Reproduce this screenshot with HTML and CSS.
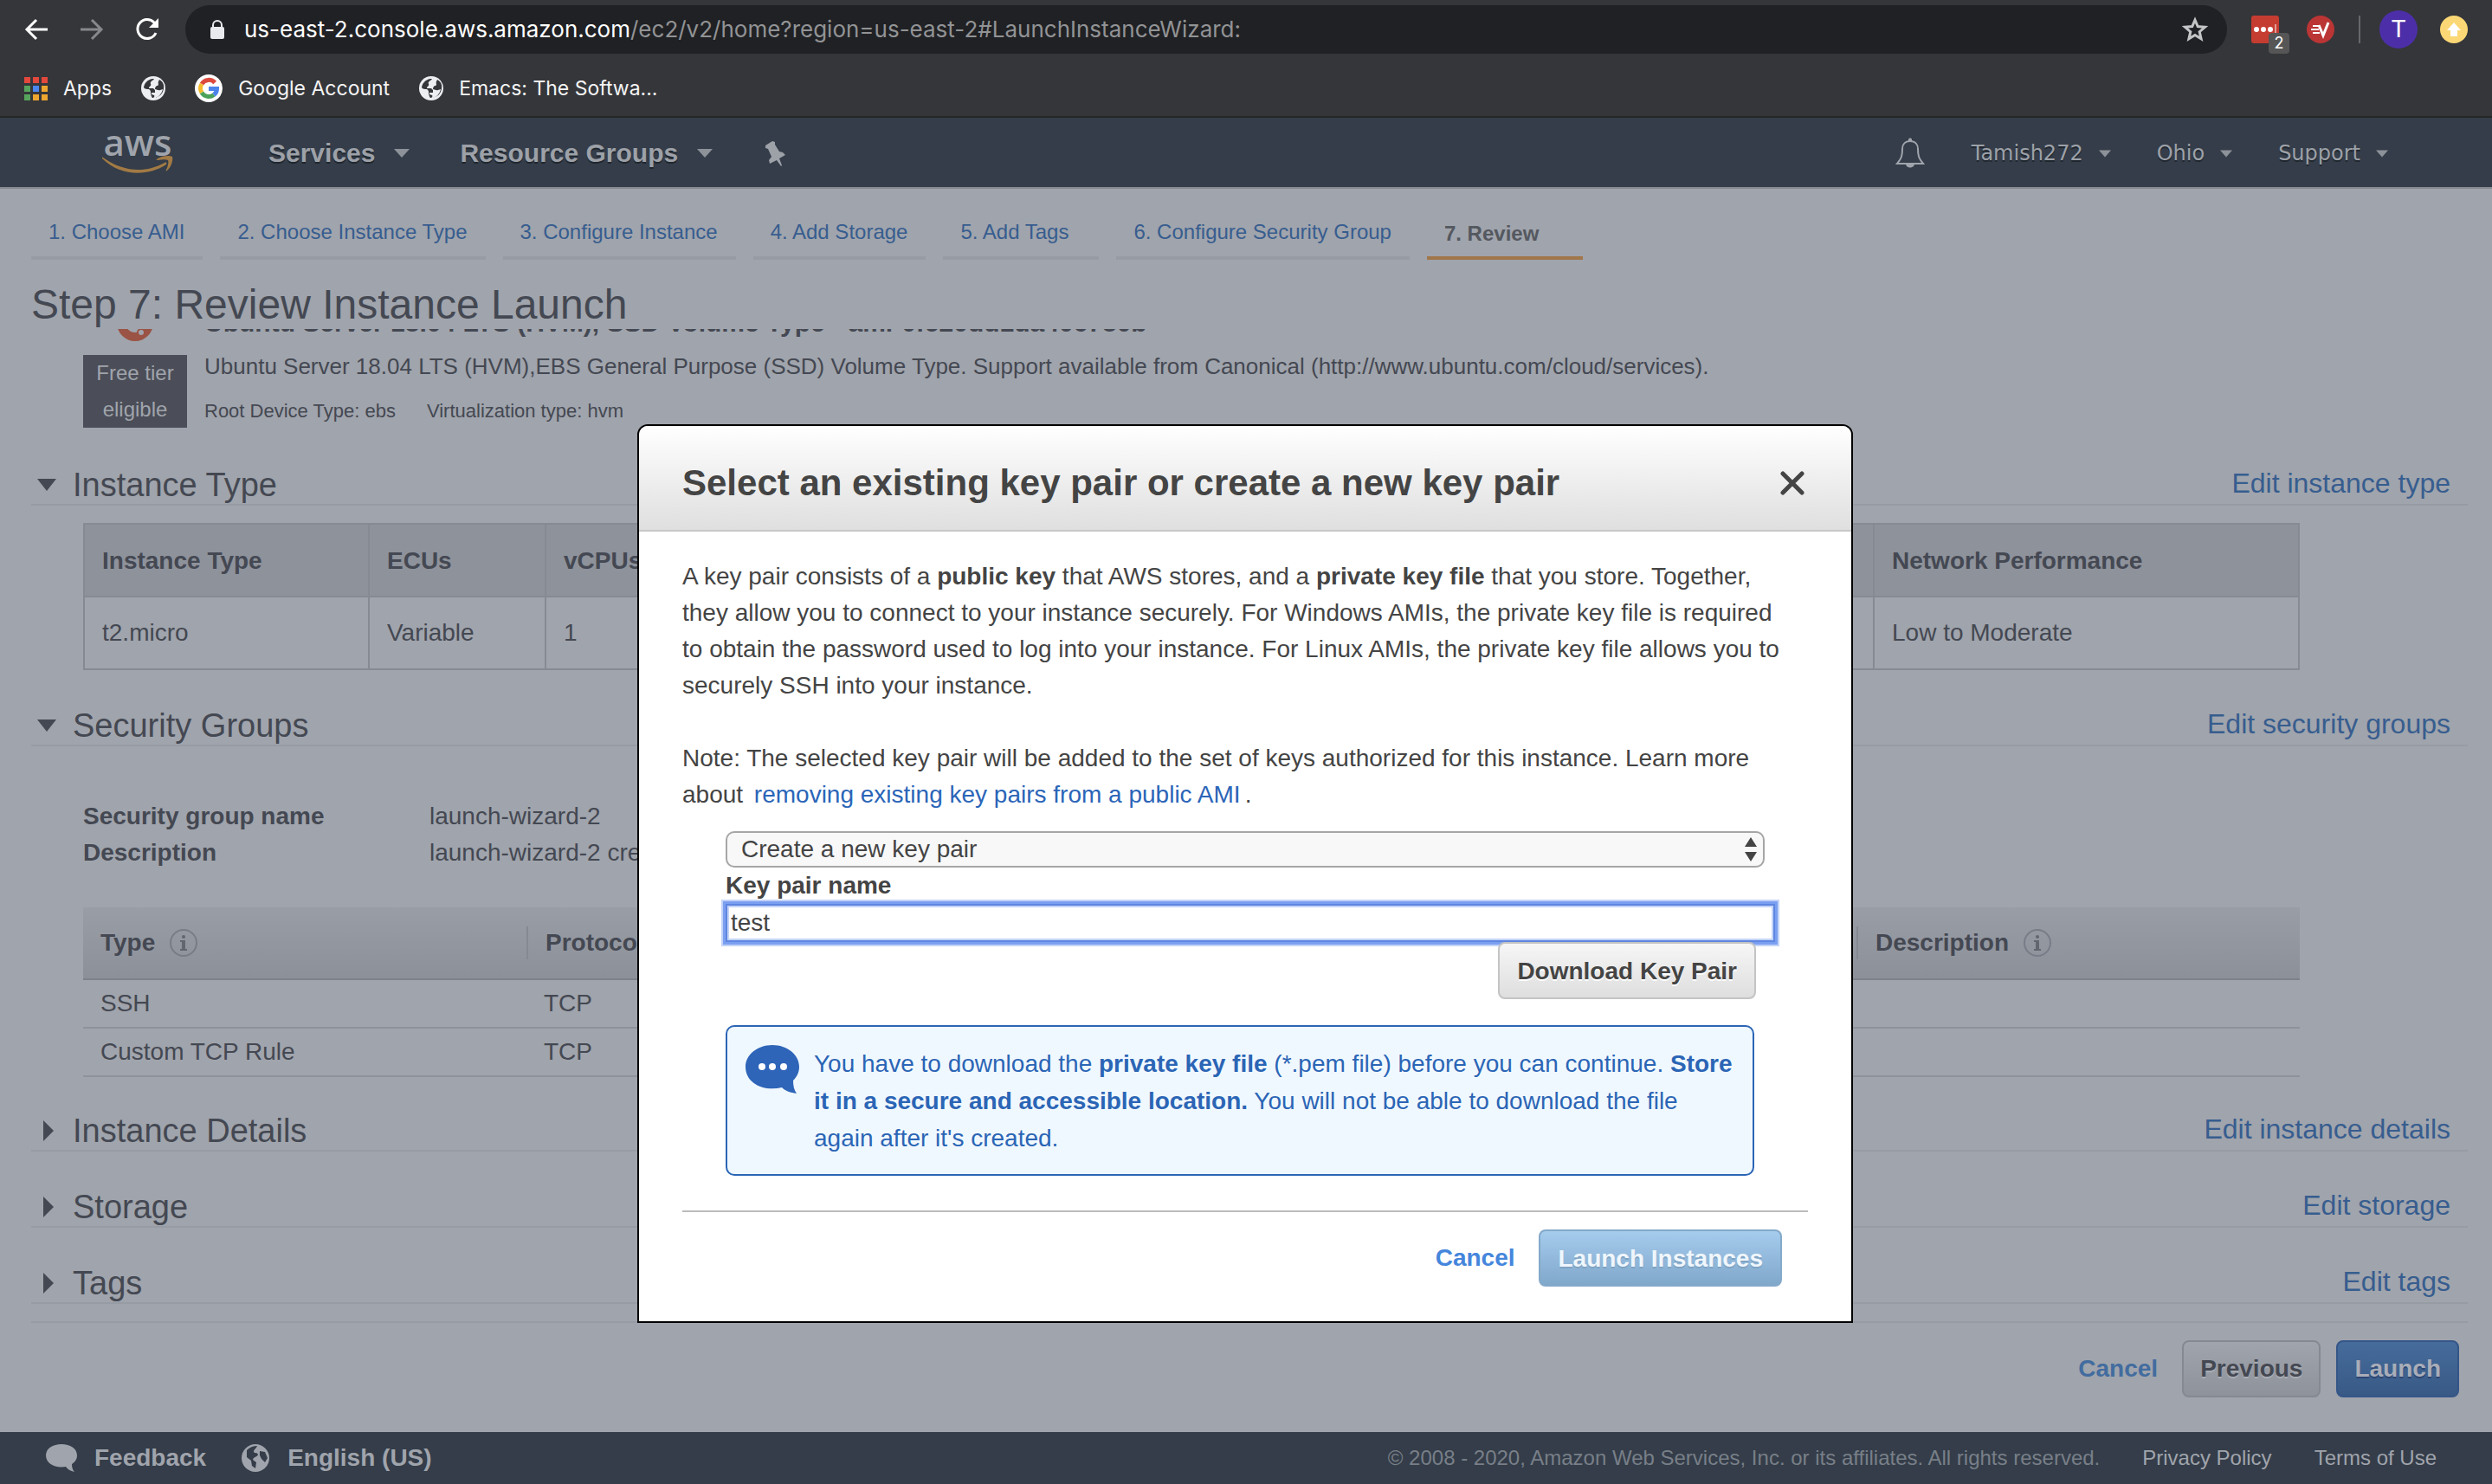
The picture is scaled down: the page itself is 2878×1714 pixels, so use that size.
FILE: index.html
```html
<!DOCTYPE html>
<html lang="en">
<head>
<meta charset="utf-8">
<meta name="viewport" content="width=device-width, initial-scale=1">
<title>Launch instance wizard | EC2 Management Console</title>
<link rel="stylesheet" href="styles.css">
</head>
<body>
<svg class="defs" aria-hidden="true">
  <symbol id="globe" viewBox="0 0 28 28">
    <circle cx="14" cy="14" r="14" fill="#eceef1"/>
    <path d="M3 14C3 9 7 4 13 3h2c-1 2-3 2-4 4-1 1 1 2 0 4-1 1-2 1-2 3h5l2 2v3h-4v2l3 1c1 1 0 2-1 3 6 0 10-5 11-10l-3 1c-2 1-4-1-6-1 0-2 1-4 3-4 2-1 0-3 1-5l1-2c6 3 6 9 4 14-3 6-8 7-12 7-1-1-2-4-2-6 0-1 0-3-2-4-2 0-5 0-6-2z" fill="#35363a"/>
  </symbol>
  <symbol id="down" viewBox="0 0 18 10"><path d="M0 0h18l-9 10z" fill="currentColor"/></symbol>
  <symbol id="info" viewBox="0 0 34 34">
    <circle cx="17" cy="17" r="15" fill="none" stroke="#787c86" stroke-width="2"/>
    <circle cx="17" cy="10" r="2" fill="#62666f"/>
    <path d="M13 14h6v10h2v2h-8v-2h2v-8h-2z" fill="#62666f"/>
  </symbol>
</svg>

<header class="chrome">
  <div class="toolbar">
    <button class="tool" aria-label="Back"><svg width="28" height="28" viewBox="0 0 28 28"><path d="M27 14H3M14 3L3 14l11 11" fill="none" stroke="#fff" stroke-width="3"/></svg></button>
    <button class="tool" aria-label="Forward"><svg width="28" height="28" viewBox="0 0 28 28"><path d="M1 14h24M14 3l11 11-11 11" fill="none" stroke="#87888b" stroke-width="3"/></svg></button>
    <button class="tool" aria-label="Reload"><svg width="28" height="28" viewBox="0 0 28 28"><path d="M24 18a11 11 0 1 1-2-12l3 3" fill="none" stroke="#fff" stroke-width="3"/><path d="M27 1v11H16z" fill="#fff"/></svg></button>
    <div class="omnibox">
      <svg width="18" height="24" viewBox="0 0 18 24"><path d="M4 10V7a5 5 0 0 1 10 0v3" fill="none" stroke="#e8eaed" stroke-width="2"/><rect x="1" y="9" width="16" height="14" rx="2" fill="#e8eaed"/></svg>
      <span class="url"><b>us-east-2.console.aws.amazon.com</b>/ec2/v2/home?region=us-east-2#LaunchInstanceWizard:</span>
      <svg width="30" height="30" viewBox="0 0 30 30"><path d="M15 4l3.200 7.600 8.300.7-6.300 5.400 1.900 8.100L15 21.500l-7.100 4.300 1.900-8.100-6.300-5.400 8.300-.7z" fill="none" stroke="#c4c5c7" stroke-width="3"/></svg>
    </div>
    <span class="extension">
      <svg width="32" height="32" viewBox="0 0 32 32"><rect width="32" height="32" rx="3" fill="#c53c31"/><circle cx="6" cy="16" r="3" fill="#fff"/><circle cx="14" cy="16" r="3" fill="#fff"/><circle cx="22" cy="16" r="3" fill="#fff"/><path d="M28 10v10" stroke="#fff" stroke-width="1"/></svg>
      <span class="badge">2</span>
    </span>
    <svg class="extension" width="32" height="32" viewBox="0 0 32 32"><circle cx="16" cy="16" r="16" fill="#bb3535"/><path d="M7 12h8M5 16h9M7 20h8" fill="none" stroke="#fff" stroke-width="2"/><path d="M14 11l5 12 6-15" fill="none" stroke="#fff" stroke-width="3"/></svg>
    <span class="divider"></span>
    <span class="avatar">T</span>
    <svg class="update" width="32" height="32" viewBox="0 0 32 32"><circle cx="16" cy="16" r="16" fill="#fbd875"/><path d="M16 8l8 9h-4v7h-8v-7H8z" fill="#fff"/></svg>
  </div>
  <nav class="bookmarks">
    <a href="#"><svg width="27" height="27" viewBox="0 0 27 27"><path d="M0 0h7v7H0zM10 0h7v7h-7zM20 0h7v7h-7z" fill="#e2483c"/><path d="M0 10h7v7H0zM0 20h7v7H0z" fill="#56a45c"/><path d="M10 10h7v7h-7z" fill="#4b87ee"/><path d="M20 10h7v7h-7zM10 20h7v7h-7zM20 20h7v7h-7z" fill="#eda62f"/></svg>Apps</a>
    <a href="#" aria-label="Bookmark"><svg width="28" height="28"><use href="#globe"/></svg></a>
    <a href="#"><svg width="32" height="32" viewBox="0 0 32 32"><circle cx="16" cy="16" r="16" fill="#fff"/><g fill="none" stroke-width="5"><path d="M23.200 9.500A9.500 9.500 0 0 0 8 11" stroke="#dc4a3d"/><path d="M8 11a9.500 9.500 0 0 0 0 10" stroke="#f5bb2e"/><path d="M8 21a9.500 9.500 0 0 0 14 2.500" stroke="#4ba25a"/><path d="M16 16.500h9.500c0 3-1.500 5.500-3.500 7" stroke="#4b83ea"/></g></svg>Google Account</a>
    <a href="#"><svg width="28" height="28"><use href="#globe"/></svg>Emacs: The Softwa...</a>
  </nav>
</header>

<div class="console">
  <nav class="awsnav">
    <a class="logo" href="#"><span>aws</span><svg width="82" height="20" viewBox="0 0 82 20"><path d="M1 2c24 17 49 18 71 6 2-1 3 0 2 2-21 14-53 14-74-7-1-1 0-2 1-1z" fill="#a27a45"/><path d="M63 4c5-4 14-5 18-3 1 4-1 12-6 16-1 1-2 0-1-1 2-4 3-9 2-11-2-1-7-1-12 0-1 0-2 0-1-1z" fill="#a27a45"/></svg></a>
    <button class="menu main-menu">Services <svg width="18" height="10"><use href="#down"/></svg></button>
    <button class="menu main-menu">Resource Groups <svg width="18" height="10"><use href="#down"/></svg></button>
    <button class="menu" aria-label="Pin"><svg width="26" height="30" viewBox="0 0 26 30"><path d="M3 6l8-5 3 1v3l5 8 4 1 3 3-7 4 3 8-1 1-5-7-8 4-1-4 3-4-4-9-3-1z" fill="#9da1a8"/></svg></button>
    <span class="grow"></span>
    <button class="menu bell" aria-label="Notifications"><svg width="34" height="36" viewBox="0 0 34 36"><path d="M17 4c-6 0-9 4-9 9 0 8-1 11-6 17h30c-5-6-6-9-6-17 0-5-3-9-9-9z" fill="none" stroke="#a0a4ac" stroke-width="2"/><path d="M15 4V2c0-2 4-2 4 0v2zM12 30h10c0 6-10 6-10 0z" fill="#a0a4ac"/></svg></button>
    <button class="menu small-menu">Tamish272 <svg width="14" height="9"><use href="#down"/></svg></button>
    <button class="menu small-menu">Ohio <svg width="14" height="9"><use href="#down"/></svg></button>
    <button class="menu small-menu">Support <svg width="14" height="9"><use href="#down"/></svg></button>
  </nav>

  <main class="wizard">
    <nav class="steps">
      <a href="#">1. Choose AMI</a>
      <a href="#">2. Choose Instance Type</a>
      <a href="#">3. Configure Instance</a>
      <a href="#">4. Add Storage</a>
      <a href="#">5. Add Tags</a>
      <a href="#">6. Configure Security Group</a>
      <span class="current">7. Review</span>
    </nav>
    <h1>Step 7: Review Instance Launch</h1>

    <div class="review">
      <section class="ami">
        <div class="ami-side">
          <svg width="42" height="42" viewBox="0 0 42 42"><circle cx="21" cy="21" r="21" fill="#9a5344"/><circle cx="21" cy="21" r="9" fill="none" stroke="#a0a4ac" stroke-width="4"/><g fill="#a0a4ac" stroke="#9a5344" stroke-width="2"><circle cx="8" cy="21" r="4"/><circle cx="28" cy="10" r="4"/><circle cx="28" cy="32" r="4"/></g></svg>
          <span class="tier">Free tier eligible</span>
        </div>
        <div>
          <h2>Ubuntu Server 18.04 LTS (HVM), SSD Volume Type - ami-0fc20dd1da406780b</h2>
          <p>Ubuntu Server 18.04 LTS (HVM),EBS General Purpose (SSD) Volume Type. Support available from Canonical (http://www.ubuntu.com/cloud/services).</p>
          <p class="facts"><span>Root Device Type: ebs</span><span>Virtualization type: hvm</span></p>
        </div>
      </section>

      <section>
        <div class="head"><svg width="24" height="14" viewBox="0 0 24 14"><path d="M1 0h22L12 14z" fill="#444852"/></svg><h2>Instance Type</h2><a href="#">Edit instance type</a></div>
        <table class="type-table">
          <colgroup><col class="c-type"><col class="c-ecu"><col><col class="c-net"></colgroup>
          <thead><tr><th>Instance Type</th><th>ECUs</th><th>vCPUs</th><th>Network Performance</th></tr></thead>
          <tbody><tr><td>t2.micro</td><td>Variable</td><td>1</td><td>Low to Moderate</td></tr></tbody>
        </table>
      </section>

      <section>
        <div class="head"><svg width="24" height="14" viewBox="0 0 24 14"><path d="M1 0h22L12 14z" fill="#444852"/></svg><h2>Security Groups</h2><a href="#">Edit security groups</a></div>
        <dl class="group">
          <dt>Security group name</dt><dd>launch-wizard-2</dd>
          <dt>Description</dt><dd>launch-wizard-2 created</dd>
        </dl>
        <table class="rules">
          <colgroup><col class="c-rule"><col><col class="c-desc"></colgroup>
          <thead><tr>
            <th><span>Type <svg width="34" height="34"><use href="#info"/></svg></span></th>
            <th><span>Protocol</span></th>
            <th><span>Description <svg width="34" height="34"><use href="#info"/></svg></span></th>
          </tr></thead>
          <tbody>
            <tr><td>SSH</td><td>TCP</td><td></td></tr>
            <tr><td>Custom TCP Rule</td><td>TCP</td><td></td></tr>
          </tbody>
        </table>
      </section>

      <section class="closed"><div class="head"><svg width="24" height="24" viewBox="0 0 24 24"><path d="M8 0v24l12-12z" fill="#444852"/></svg><h2>Instance Details</h2><a href="#">Edit instance details</a></div></section>
      <section class="closed"><div class="head"><svg width="24" height="24" viewBox="0 0 24 24"><path d="M8 0v24l12-12z" fill="#444852"/></svg><h2>Storage</h2><a href="#">Edit storage</a></div></section>
      <section class="closed"><div class="head"><svg width="24" height="24" viewBox="0 0 24 24"><path d="M8 0v24l12-12z" fill="#444852"/></svg><h2>Tags</h2><a href="#">Edit tags</a></div></section>
    </div>

    <div class="wizard-actions">
      <a href="#">Cancel</a>
      <button class="btn dim">Previous</button>
      <button class="btn dim-primary">Launch</button>
    </div>
  </main>

  <footer class="footer">
    <a class="strong" href="#"><svg width="36" height="32" viewBox="0 0 36 32"><path d="M18 0c10 0 18 5 18 13 0 5-3 8-6 10 0 4 1 7 3 9-5-1-8-3-10-6C10 28 0 22 0 13 0 5 8 0 18 0z" fill="#a0a4ac"/></svg>Feedback</a>
    <a class="strong" href="#"><svg width="34" height="34" viewBox="0 0 34 34"><circle cx="17" cy="17" r="16" fill="#a0a4ac"/><path d="M7 8c4-4 8-5 12-5-1 3-4 4-4 7 1 2 4 0 5 3-1 3-5 2-6 6l4 3-1 7-4-3-1-6-5-4zM22 9l6 1 3 7-3 5-4-4-2-4z" fill="#343d49"/></svg>English (US)</a>
    <span class="grow"></span>
    <span class="legal">© 2008 - 2020, Amazon Web Services, Inc. or its affiliates. All rights reserved.</span>
    <a href="#">Privacy Policy</a>
    <a href="#">Terms of Use</a>
  </footer>

  <div class="overlay">
    <div class="modal" role="dialog" aria-labelledby="modal-title">
      <div class="modal-head">
        <h2 id="modal-title">Select an existing key pair or create a new key pair</h2>
        <button class="close" aria-label="Close"><svg width="28" height="28" viewBox="0 0 28 28"><path d="M3 3l22 22M25 3L3 25" fill="none" stroke="#444" stroke-width="5" stroke-linecap="round"/></svg></button>
      </div>
      <div class="modal-body">
        <p>A key pair consists of a <b>public key</b> that AWS stores, and a <b>private key file</b> that you store. Together, they allow you to connect to your instance securely. For Windows AMIs, the private key file is required to obtain the password used to log into your instance. For Linux AMIs, the private key file allows you to securely SSH into your instance.</p>
        <p>Note: The selected key pair will be added to the set of keys authorized for this instance. Learn more about <a href="#">removing existing key pairs from a public AMI</a>.</p>
        <form class="key-form">
          <div class="select">
            <select aria-label="Key pair option"><option>Create a new key pair</option></select>
            <svg width="14" height="28" viewBox="0 0 14 28"><path d="M7 0l7 11H0zM7 28l7-11H0z" fill="#444"/></svg>
          </div>
          <label for="key-name">Key pair name</label>
          <input id="key-name" type="text" value="test">
          <button class="btn download" type="button">Download Key Pair</button>
          <div class="notice">
            <svg width="62" height="56" viewBox="0 0 62 56"><path d="M31 0c17 0 31 11 31 25 0 7-3 12-7 16 0 6 1 11 4 15-7-1-13-3-17-7C22 54 0 45 0 25 0 11 14 0 31 0z" fill="#2e65b8"/><g fill="#fff"><circle cx="19" cy="25" r="4"/><circle cx="31" cy="25" r="4"/><circle cx="44" cy="25" r="4"/></g></svg>
            <p>You have to download the <b>private key file</b> (*.pem file) before you can continue. <b>Store it in a secure and accessible location.</b> You will not be able to download the file again after it's created.</p>
          </div>
        </form>
        <div class="modal-actions">
          <a href="#">Cancel</a>
          <button class="btn pale-primary">Launch Instances</button>
        </div>
      </div>
    </div>
  </div>
</div>
</body>
</html>
```
FILE: styles.css
```css
* { box-sizing: border-box; }

body {
  margin: 0;
  min-height: 100vh;
  display: flex;
  flex-direction: column;
  background: #a0a4ac;
  color: #444852;
  font: 28px/42px "Liberation Sans", Arial, sans-serif;
}

h1, h2, p, dl, dd { margin: 0; }
a { color: #375d8f; text-decoration: none; }
button { font: inherit; color: inherit; border: 0; padding: 0; background: none; }
svg { display: block; flex: none; }
.defs { position: absolute; width: 0; height: 0; }
.grow { flex: 1; }

/* Browser chrome */
.chrome {
  background: #35363a;
  border-bottom: 2px solid #262726;
  font-family: Inter, sans-serif;
}
.toolbar {
  display: flex;
  align-items: center;
  height: 68px;
  padding: 0 28px;
}
.tool { margin-right: 36px; }
.omnibox {
  flex: 1;
  display: flex;
  align-items: center;
  height: 56px;
  margin: 0 28px 0 -6px;
  padding: 0 22px 0 28px;
  border-radius: 28px;
  background: #202124;
}
.url { flex: 1; margin-left: 22px; color: #929395; font-size: 26px; line-height: 40px; }
.url b { color: #fff; font-weight: 400; }
.extension { position: relative; margin-right: 32px; }
.badge {
  position: absolute;
  left: 20px;
  top: 20px;
  width: 24px;
  border-radius: 4px;
  background: #565656;
  color: #fff;
  font-size: 18px;
  line-height: 24px;
  text-align: center;
}
.divider { width: 2px; height: 32px; margin: 0 22px 0 -4px; background: #66676a; }
.avatar {
  width: 44px;
  margin-right: 26px;
  border-radius: 50%;
  background: #4c2fa8;
  color: #fff;
  font: 28px/44px Roboto, sans-serif;
  text-align: center;
}
.bookmarks {
  display: flex;
  align-items: center;
  gap: 34px;
  height: 66px;
  padding: 2px 28px 0;
}
.bookmarks a {
  display: flex;
  align-items: center;
  gap: 18px;
  color: #f4f4f4;
  font-size: 23px;
}

/* Console navigation */
.console { position: relative; flex: 1; display: flex; flex-direction: column; }
.awsnav {
  display: flex;
  align-items: center;
  height: 82px;
  padding: 2px 120px 0 118px;
  background: #343d49;
  border-bottom: 2px solid #868a8f;
  color: #a0a4ac;
}
.logo {
  display: flex;
  flex-direction: column;
  align-items: center;
  margin-right: 110px;
  padding-bottom: 6px;
  color: #a0a4ac;
  font: 600 42px/32px "Open Sans", sans-serif;
}
.menu { display: flex; align-items: center; text-shadow: 0 2px 0 #20262e; color: #9da1a8; }
.menu svg { color: #8d9299; }
.main-menu { gap: 22px; margin-right: 58px; font-weight: 700; font-size: 30px; }
.bell { margin-right: 54px; }
.small-menu { gap: 18px; font: 24px/36px "DejaVu Sans", sans-serif; }
.small-menu + .small-menu { margin-left: 53px; }

/* Wizard */
.wizard { flex: 1; padding: 32px 28px 40px 36px; }
.steps { display: flex; gap: 20px; font-size: 24px; line-height: 36px; }
.steps > * { min-width: 180px; padding: 0 21px 10px 20px; border-bottom: 4px solid #979ba4; }
.steps .current {
  padding-bottom: 6px;
  border-color: #a0764a;
  color: #54585f;
  font-weight: 700;
  line-height: 40px;
}
h1 { margin-top: 24px; font-size: 48px; line-height: 56px; font-weight: 400; }
.review { overflow: hidden; padding-bottom: 20px; border-bottom: 2px solid #979ba4; }

.ami { display: flex; gap: 20px; margin: -28px 0 0 60px; }
.ami h2 { font-size: 30px; line-height: 42px; }
.ami p { margin-top: 8px; font-size: 26px; }
.ami .facts { display: flex; gap: 36px; margin-top: 10px; font-size: 22px; }
.ami-side { display: flex; flex-direction: column; align-items: center; gap: 16px; width: 120px; }
.tier {
  width: 120px;
  padding: 0 10px;
  background: #4b4e58;
  color: #a0a4ac;
  font-size: 24px;
  text-align: center;
}

.head {
  display: flex;
  align-items: center;
  margin-top: 42px;
  padding: 0 20px 0 6px;
  border-bottom: 2px solid #979ba4;
}
.head h2 { flex: 1; margin-left: 18px; font-size: 38px; line-height: 44px; font-weight: 400; }
.head a { padding-bottom: 4px; font-size: 32px; line-height: 36px; }

table {
  table-layout: fixed;
  width: calc(100% - 254px);
  margin-left: 60px;
  border-collapse: collapse;
  text-align: left;
}
th, td { padding: 0 20px; }
.type-table { margin-top: 20px; }
.type-table th, .type-table td { height: 84px; border: 2px solid #868a93; }
.type-table th { padding-top: 2px; background: #8e929b; }
.c-type { width: 329px; }
.c-ecu { width: 204px; }
.c-net { width: 491px; }

.group {
  display: grid;
  grid-template-columns: 400px 1fr;
  margin: 60px 0 42px 60px;
}
.group dt { font-weight: 700; }
.rules { border-collapse: separate; border-spacing: 0; }
.rules th { height: 84px; padding: 0; background: linear-gradient(#999da6, #8c9099); border-bottom: 2px solid #7d8189; }
.rules th span { display: flex; align-items: center; gap: 16px; height: 38px; padding-left: 20px; }
.rules th + th span { border-left: 2px solid #858992; }
.rules td { height: 56px; border-bottom: 2px solid #8e929b; }
.c-rule { width: 512px; }
.c-desc { width: 512px; }
.rules { margin-bottom: -2px; }

.wizard-actions { display: flex; align-items: center; justify-content: flex-end; gap: 18px; padding: 20px 10px 0; }
.wizard-actions a { margin-right: 10px; color: #426c9f; font-weight: 700; }
.wizard-actions .btn { padding: 0 19px; }

.btn {
  height: 66px;
  padding: 2px 20px 0;
  border: 2px solid #c4c4c4;
  border-radius: 8px;
  font-weight: 700;
}
.dim { border-color: #858992; background: linear-gradient(#a0a4ac, #8e929b); text-shadow: 0 2px 0 #a9adb5; }
.dim-primary { border-color: #345688; background: linear-gradient(#466c9c, #385985); color: #a9adb8; text-shadow: 0 2px 0 #2c4672; }

.footer {
  display: flex;
  align-items: center;
  gap: 49px;
  height: 60px;
  padding: 0 64px 0 53px;
  background: #343d49;
  color: #787f88;
  font-size: 24px;
}
.footer a { color: #a0a4ac; }
.footer .strong { display: flex; align-items: center; gap: 20px; margin-right: -9px; font-size: 28px; font-weight: 700; }

/* Key pair dialog */
.overlay { position: absolute; inset: 0; padding: 354px 2px 0 0; }
.modal {
  max-width: 1404px;
  margin: 0 auto;
  border: 2px solid #000;
  border-radius: 12px 12px 0 0;
  background: #fff;
  color: #444;
}
.modal a { color: #2b65b8; }
.modal-head {
  display: flex;
  align-items: center;
  justify-content: space-between;
  height: 122px;
  padding: 12px 54px 0 50px;
  border-bottom: 2px solid #c8c8c8;
  border-radius: 10px 10px 0 0;
  background: linear-gradient(#fff, #dfdfdf);
}
.modal-head h2 { font-size: 42px; line-height: 48px; }
.modal-body { padding: 31px 50px 40px; }
.modal-body > p { margin-bottom: 42px; padding-right: 25px; }
.modal-body > p + p { margin-bottom: 21px; }
.modal-body > p a { padding: 0 5px; }

.key-form { display: flex; flex-direction: column; margin: 0 38px 0 50px; }
.select { position: relative; margin-right: 12px; }
.select select {
  display: block;
  appearance: none;
  width: 100%;
  height: 42px;
  padding: 0 16px;
  border: 2px solid #a6a6a6;
  border-radius: 10px;
  background: #f8f8f8;
  color: #444;
  font: inherit;
  line-height: 38px;
}
.select svg { position: absolute; right: 9px; top: 7px; }
.key-form label { font-weight: 700; }
.key-form input {
  height: 44px;
  padding: 0 4px;
  border: 2px solid #5f86e0;
  box-shadow: 0 0 0 3px #7b9ff0, 0 0 0 5px #c3d3f8, inset 0 0 0 2px #c3d3f8;
  background: #fff;
  color: #444;
  font: inherit;
  outline: 0;
}
.download {
  position: relative;
  align-self: flex-end;
  margin-right: 22px;
  background: linear-gradient(#f6f6f6, #dedede);
  text-shadow: 0 2px 0 #fff;
}
.notice {
  display: flex;
  gap: 17px;
  margin: 30px 24px 40px 0;
  padding: 21px 16px 20px 21px;
  border: 2px solid #2b65b5;
  border-radius: 10px;
  background: #f0f8ff;
  color: #2b65b5;
  line-height: 43px;
}
.modal-actions {
  display: flex;
  align-items: center;
  justify-content: flex-end;
  gap: 28px;
  padding: 20px 30px 0 0;
  border-top: 2px solid #bbb;
}
.modal-actions a { color: #4586dc; font-weight: 700; }
.pale-primary { border-color: #84a9ca; background: linear-gradient(#a5cbed, #80a8ca); color: #eff6fc; text-shadow: 0 2px 0 #7fa3c2; }
```
